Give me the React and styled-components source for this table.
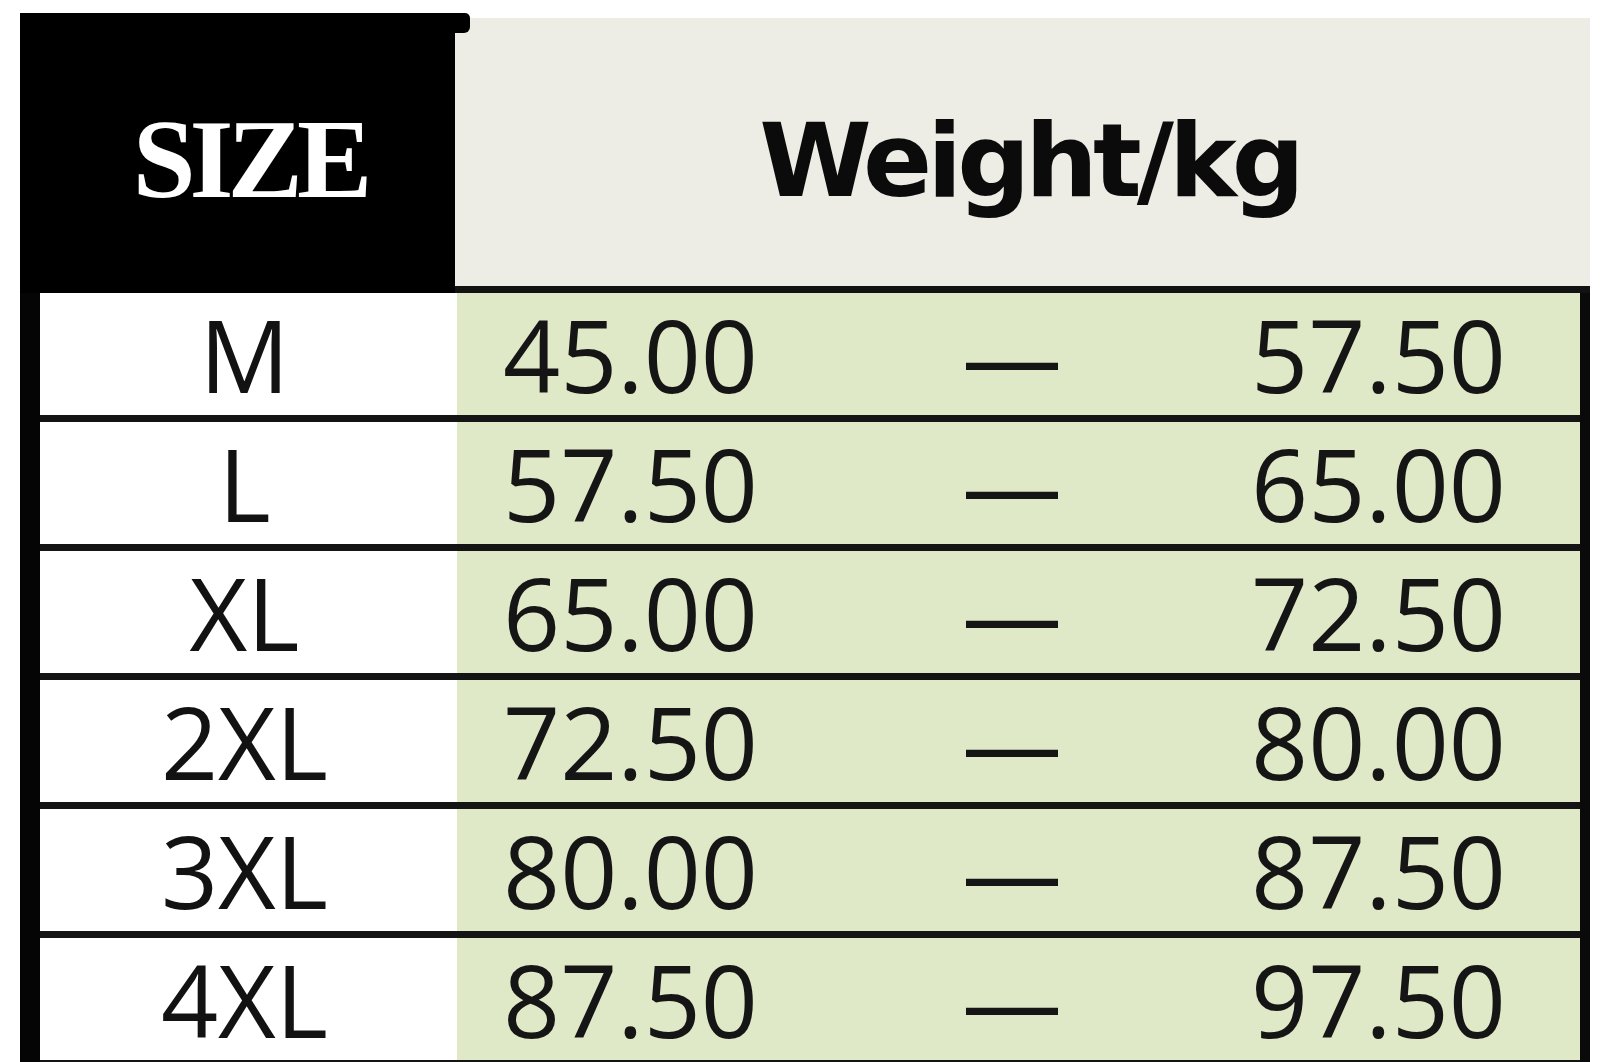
import React from "react";
import styled, { createGlobalStyle } from "styled-components";

const GlobalStyle = createGlobalStyle`
  html, body {
    margin: 0;
    padding: 0;
    background: #ffffff;
  }
  body {
    font-family: "Open Sans", "Noto Sans", sans-serif;
    color: #111;
    overflow: hidden;
  }
`;

const Sheet = styled.div`
  width: 1570px;
  height: 1062px;
  padding: 13px 0 0 20px;
  box-sizing: content-box;
  overflow: hidden;
`;

const Header = styled.div`
  display: flex;
  align-items: flex-start;
  height: 280px;
`;

const SizeCell = styled.div`
  position: relative;
  width: 435px;
  height: 280px;
  flex-shrink: 0;
  box-sizing: border-box;
  background: #000;
  display: flex;
  justify-content: center;
  padding: 89px 0 0 24px;
  font-family: "Liberation Serif", "Times New Roman", serif;
  font-weight: 700;
  font-size: 113px;
  line-height: 1;
  letter-spacing: -6px;
  color: #fff;

  &::after {
    content: "";
    position: absolute;
    left: 100%;
    top: 0;
    width: 15px;
    height: 20px;
    background: #000;
    border-radius: 0 5px 6px 0;
  }
`;

const WeightCell = styled.div`
  flex: 1;
  margin-top: 5px;
  height: 275px;
  box-sizing: border-box;
  background: #eeede5;
  border-bottom: 7px solid #121212;
  display: flex;
  justify-content: center;
  padding: 92px 0 0 14px;
  font-family: "DejaVu Sans", "Verdana", sans-serif;
  font-weight: 700;
  font-size: 102px;
  line-height: 1;
  letter-spacing: -5px;
  color: #0b0b0b;
`;

const Body = styled.div`
  border-left: 20px solid #050505;
  border-right: 10px solid #0a0a0a;
`;

const Row = styled.div`
  display: grid;
  grid-template-columns: 417px 1fr;
  height: 129px;
  box-sizing: border-box;
  border-bottom: 7px solid #141414;
`;

const SizeLabel = styled.div`
  background: #ffffff;
  text-align: center;
  padding-right: 8px;
  font-size: 100px;
  line-height: 122px;
  color: #121212;
`;

const Range = styled.div`
  display: grid;
  grid-template-columns: 460px 190px 1fr;
  background: #dfe8c7;
  font-size: 100px;
  line-height: 122px;
  color: #151515;
`;

const Value = styled.span`
  padding-left: ${(p) => p.$pad}px;
  white-space: nowrap;
`;

const Dash = styled.span`
  text-align: center;
`;

const rows = [
  ["M", "45.00", "57.50"],
  ["L", "57.50", "65.00"],
  ["XL", "65.00", "72.50"],
  ["2XL", "72.50", "80.00"],
  ["3XL", "80.00", "87.50"],
  ["4XL", "87.50", "97.50"],
];

export default function App() {
  return (
    <>
      <GlobalStyle />
      <Sheet>
        <Header>
          <SizeCell>SIZE</SizeCell>
          <WeightCell>Weight/kg</WeightCell>
        </Header>
        <Body>
          {rows.map(([size, from, to]) => (
            <Row key={size}>
              <SizeLabel>{size}</SizeLabel>
              <Range>
                <Value $pad={46}>{from}</Value>
                <Dash>—</Dash>
                <Value $pad={144}>{to}</Value>
              </Range>
            </Row>
          ))}
        </Body>
      </Sheet>
    </>
  );
}
